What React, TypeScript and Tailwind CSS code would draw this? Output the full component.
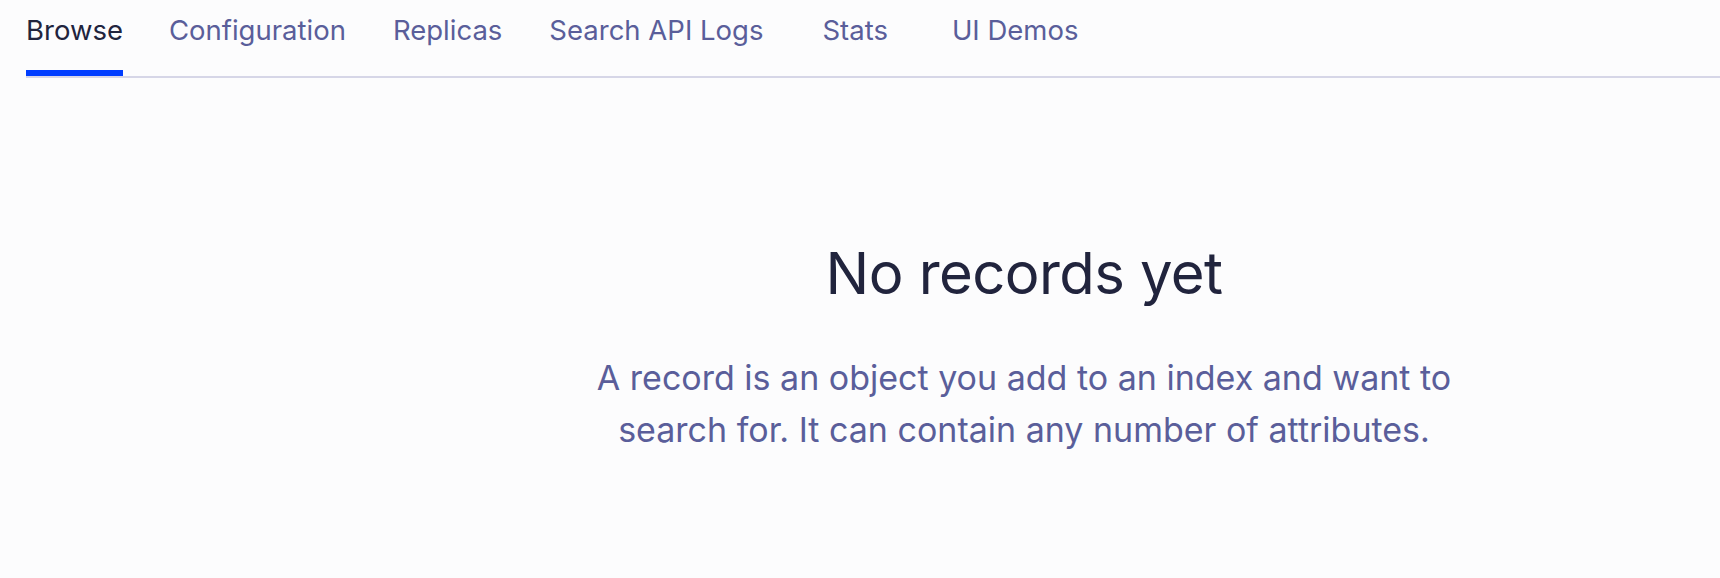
import React from "react";

const tabs = ["Browse", "Configuration", "Replicas", "Search API Logs", "Stats", "UI Demos"];
const gaps = ["mr-[46px]", "mr-[47px]", "mr-[47px]", "mr-[59px]", "mr-[64px]", "mr-0"];

export default function App() {
  return (
    <div className="min-h-[578px] w-full bg-[#fcfcfd] font-['Inter',sans-serif]">
      <nav className="ml-[26px] flex h-[78px] border-b-2 border-[#d6d6e7]">
        {tabs.map((t, i) => (
          <div key={t} className={`flex flex-col ${gaps[i]}`}>
            <span
              className={`pt-[11px] text-[27.5px] leading-[39px] whitespace-nowrap ${
                i === 0 ? "text-[#21243d]" : "text-[#5a5e9a]"
              }`}
            >
              {t}
            </span>
            <div className="flex-1" />
            <div className={`h-[6px] ${i === 0 ? "bg-[#003dff]" : "bg-transparent"}`} />
          </div>
        ))}
      </nav>
      <main className="flex">
        <div className="w-[328px] shrink-0" />
        <div className="flex flex-1 flex-col items-center pt-[155px]">
          <h1 className="text-[58px] leading-[80px] tracking-[-0.01em] text-[#21243d]">No records yet</h1>
          <p className="mt-[39px] max-w-[880px] text-center text-[34px] leading-[52px] text-[#5a5e9a]">
            A record is an object you add to an index and want to search for. It can contain any number of
            attributes.
          </p>
        </div>
      </main>
    </div>
  );
}
